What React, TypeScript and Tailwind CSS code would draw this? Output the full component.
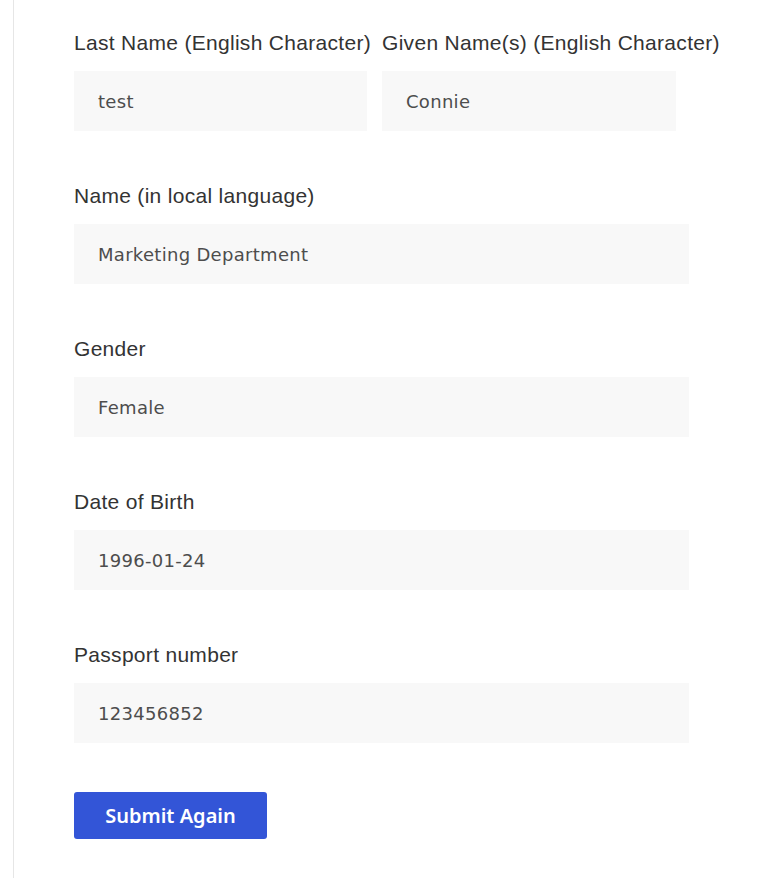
import React from "react";

const labelFont = { fontFamily: '"Liberation Sans", Arial, sans-serif' };
const valueFont = { fontFamily: '"DejaVu Sans", Verdana, sans-serif' };
const buttonFont = { fontFamily: '"Noto Sans", "Open Sans", sans-serif' };

function Field({ label, value, width = "w-[615px]" }: { label: string; value: string; width?: string }) {
  return (
    <div className={`${width} shrink-0 flex flex-col`}>
      <div className="h-6 text-[21px] leading-6 tracking-[0.3px] text-[#333] whitespace-nowrap" style={labelFont}>
        {label}
      </div>
      <div
        className="mt-4 h-[60px] bg-[#f8f8f8] flex items-center pl-6 text-[18px] tracking-[0.3px] text-[#4d4d4d]"
        style={valueFont}
      >
        {value}
      </div>
    </div>
  );
}

export default function App() {
  return (
    <div className="min-h-[878px] bg-white">
      <div className="ml-[13px] border-l border-[#e6e6e6] min-h-[878px] pl-[60px] pt-[31px] pb-10">
        <div className="flex gap-[15px]">
          <Field label="Last Name (English Character)" value="test" width="w-[293px]" />
          <Field label="Given Name(s) (English Character)" value="Connie" width="w-[294px]" />
        </div>
        <div className="flex flex-col gap-[53px] mt-[53px]">
          <Field label="Name (in local language)" value="Marketing Department" />
          <Field label="Gender" value="Female" />
          <Field label="Date of Birth" value="1996-01-24" />
          <Field label="Passport number" value="123456852" />
        </div>
        <button
          className="mt-[49px] w-[193px] h-[47px] rounded-[3px] bg-[#3355d7] text-white text-[20px] font-semibold"
          style={buttonFont}
        >
          Submit Again
        </button>
      </div>
    </div>
  );
}
